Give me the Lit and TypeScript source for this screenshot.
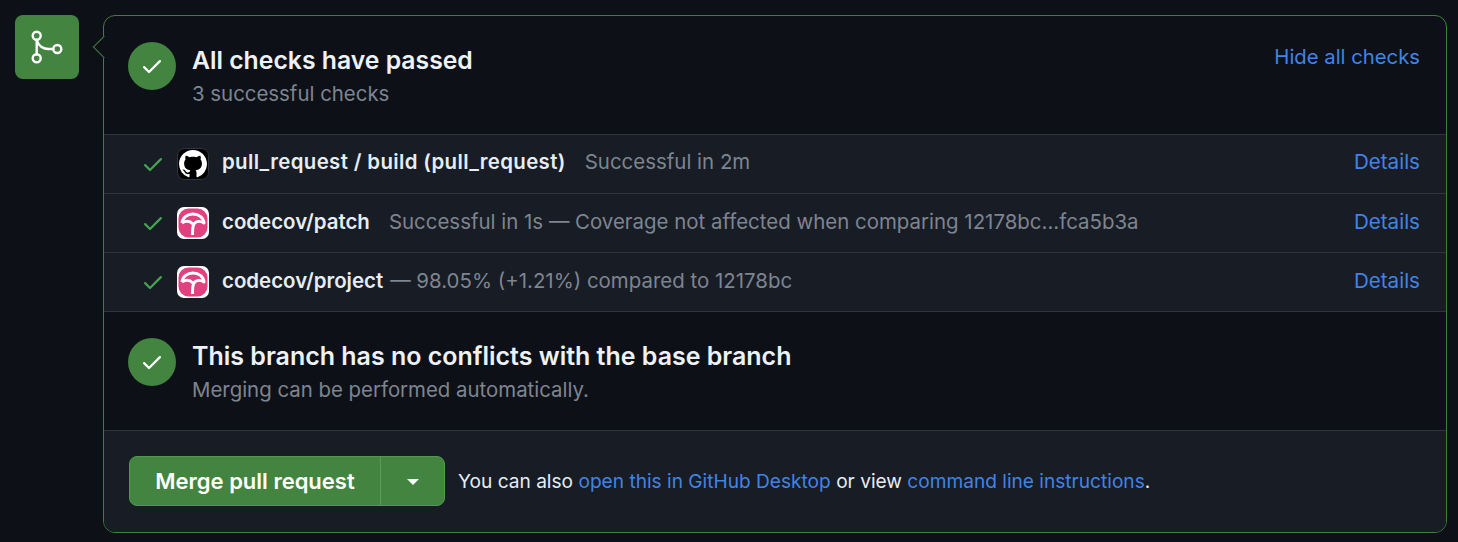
import { LitElement, css, html, svg } from "lit";
import { customElement } from "lit/decorators.js";

const CHECK =
  "M13.78 4.22a.75.75 0 0 1 0 1.06l-7.25 7.25a.75.75 0 0 1-1.06 0L2.22 9.28a.751.751 0 0 1 .018-1.042.751.751 0 0 1 1.042-.018L6 10.94l6.72-6.72a.75.75 0 0 1 1.06 0Z";
const MARK =
  "M8 0c4.42 0 8 3.58 8 8a8.013 8.013 0 0 1-5.45 7.59c-.4.08-.55-.17-.55-.38 0-.27.01-1.13.01-2.2 0-.75-.25-1.23-.54-1.48 1.78-.2 3.65-.88 3.65-3.95 0-.88-.31-1.59-.82-2.15.08-.2.36-1.02-.08-2.12 0 0-.67-.22-2.2.82-.64-.18-1.32-.27-2-.27-.68 0-1.36.09-2 .27-1.53-1.03-2.2-.82-2.2-.82-.44 1.1-.16 1.92-.08 2.12-.51.56-.82 1.28-.82 2.15 0 3.06 1.86 3.75 3.64 3.95-.23.2-.44.55-.51 1.07-.46.21-1.61.55-2.33-.66-.15-.24-.6-.83-1.23-.82-.67.01-.27.38.01.53.34.19.73.9.82 1.13.16.45.68 1.31 2.69.94 0 .67.01 1.3.01 1.49 0 .21-.15.45-.55.38A7.995 7.995 0 0 1 0 8c0-4.42 3.58-8 8-8Z";

const checks = [
  { logo: "github", name: "pull_request / build (pull_request)", cls: "spaced wide", note: "Successful in 2m" },
  { logo: "codecov", name: "codecov/patch", cls: "spaced", note: "Successful in 1s — Coverage not affected when comparing 12178bc...fca5b3a" },
  { logo: "codecov", name: "codecov/project", cls: "", note: "— 98.05% (+1.21%) compared to 12178bc" },
];

const octicon = (d: string, size: number) => html`<svg width=${size} height=${size} viewBox="0 0 16 16" fill="currentColor"><path d=${d}></path></svg>`;

const githubLogo = svg`<rect x="0.5" y="0.5" width="31" height="31" rx="7" fill="#000" stroke="#30363d"/><svg x="2" y="2" width="28" height="28" viewBox="0 0 16 16"><path d=${MARK} fill="#fff"/></svg>`;
const codecovLogo = svg`<rect width="32" height="32" rx="7" fill="#fff"/><rect x="1.500" y="1.500" width="29" height="29" rx="10" fill="#e2407f"/><g fill="none" stroke="#fff" stroke-width="3" stroke-linejoin="round"><path d="M5 16C5.500 10.500 10.500 7 16 7S26.500 10.500 27 16C23 13.500 19 14 16.800 17.200 15.800 19 15.500 23 15.500 28"/><path d="M5 16C9 13.500 13 14 16 17"/></g>`;

@customElement("app-root")
export class AppRoot extends LitElement {
  render() {
    return html`
      <div class="page">
        <div class="badge">
          <svg width="64" height="64" viewBox="0 0 64 64" fill="none" stroke="currentColor" stroke-width="2.400" stroke-linecap="round">
            <circle cx="21.700" cy="20.700" r="4"></circle>
            <circle cx="21.700" cy="43.300" r="4"></circle>
            <circle cx="42.300" cy="34" r="4"></circle>
            <path d="M21.700 24.700v14.600M21.900 26c2 4.500 6 8 11.600 8h4.800"></path>
          </svg>
        </div>
        <div class="card">
          <section class="status top">
            <div class="circle">${octicon(CHECK, 24)}</div>
            <div class="status-text">
              <h3>All checks have passed</h3>
              <p>3 successful checks</p>
            </div>
            <a class="hide">Hide all checks</a>
          </section>
          <div class="checks">
            ${checks.map(
              (c) => html`
                <div class="row">
                  <span class="tick">${octicon(CHECK, 24)}</span>
                  <svg class="logo" width="32" height="32" viewBox="0 0 32 32">${c.logo === "github" ? githubLogo : codecovLogo}</svg>
                  <strong class=${c.cls}>${c.name}</strong>
                  <span class="note">${c.note}</span>
                  <a class="details">Details</a>
                </div>
              `,
            )}
          </div>
          <section class="status mid">
            <div class="circle">${octicon(CHECK, 24)}</div>
            <div class="status-text">
              <h3>This branch has no conflicts with the base branch</h3>
              <p>Merging can be performed automatically.</p>
            </div>
          </section>
          <footer>
            <div class="merge">
              <button class="main">Merge pull request</button>
              <button class="caret"><span></span></button>
            </div>
            <p class="also">
              You can also <a>open this in GitHub Desktop</a> or view <a>command line instructions</a>.
            </p>
          </footer>
        </div>
      </div>
    `;
  }

  static styles = css`
    :host {
      display: block;
      font-family: Inter, "Liberation Sans", sans-serif;
      color: #e6edf3;
    }

    * {
      box-sizing: border-box;
    }

    .page {
      display: flex;
      gap: 24px;
      height: 542px;
      padding: 15px 11px 9px 15px;
      background: #0d1117;
    }

    .badge {
      flex: none;
      display: flex;
      width: 64px;
      height: 64px;
      border-radius: 8px;
      background: #438440;
      color: #fff;
    }

    .card {
      position: relative;
      flex: 1;
      display: flex;
      flex-direction: column;
      border: 1px solid #3f7f3d;
      border-radius: 12px;
      background: #0d1117;
    }

    .card::before {
      content: "";
      position: absolute;
      top: 23px;
      left: -8px;
      width: 15px;
      height: 15px;
      border-left: 1px solid #3f7f3d;
      border-bottom: 1px solid #3f7f3d;
      background: #0d1117;
      transform: rotate(45deg);
    }

    .status {
      position: relative;
      display: flex;
      align-items: flex-start;
      gap: 16px;
      padding: 26px 26px 0 24px;
    }

    .status.top {
      height: 118px;
    }

    .status.mid {
      height: 119px;
      padding-top: 26px;
      border-top: 1px solid #30363d;
    }

    .circle {
      flex: none;
      display: flex;
      align-items: center;
      justify-content: center;
      width: 48px;
      height: 48px;
      border-radius: 50%;
      background: #438440;
      color: #fff;
    }

    .status-text {
      flex: 1;
    }

    h3 {
      margin: 0;
      font-size: 24.750px;
      line-height: 36px;
      font-weight: 600;
      color: #eef2f6;
    }

    .mid h3 {
      font-size: 24.980px;
    }

    .status-text p {
      margin: 1px 0 0;
      font-size: 20.400px;
      line-height: 30px;
      color: #7d8590;
    }

    a {
      color: #4184e4;
    }

    .hide {
      font-size: 20.300px;
      line-height: 30px;
    }

    .checks {
      background: #181c25;
    }

    .row {
      display: flex;
      align-items: center;
      height: 59px;
      padding: 0 26px 0 37px;
      border-top: 1px solid #30363d;
      font-size: 20.450px;
    }

    .tick {
      display: flex;
      color: #46a34f;
      margin-right: 12px;
    }

    .logo {
      flex: none;
      margin-right: 13px;
    }

    strong {
      font-weight: 600;
      color: #e6edf3;
      margin: 0 7px 3px 0;
    }

    strong.spaced {
      margin-right: 19px;
    }

    strong.wide {
      letter-spacing: 0.350px;
    }

    .note {
      flex: 1;
      padding-bottom: 3px;
      color: #7d8590;
    }

    .details {
      padding-bottom: 3px;
      font-size: 20.600px;
    }

    .row:first-child strong {
      margin-bottom: 5px;
    }

    .row:first-child .note,
    .row:first-child .details {
      padding-bottom: 5px;
    }

    footer {
      flex: 1;
      display: flex;
      align-items: center;
      gap: 13px;
      padding: 0 25px;
      border-top: 1px solid #30363d;
      border-radius: 0 0 11px 11px;
      background: #181c25;
    }

    .merge {
      display: flex;
      height: 50px;
      margin-bottom: 2px;
      border-radius: 8px;
      overflow: hidden;
      border: 1px solid #4f9a4c;
      background: #438440;
    }

    button {
      border: 0;
      background: none;
      color: #fff;
      font: inherit;
    }

    .main {
      width: 250px;
      font-size: 22px;
      font-weight: 600;
    }

    .caret {
      width: 64px;
      display: flex;
      align-items: center;
      justify-content: center;
      border-left: 1px solid #5a9c57;
    }

    .caret span {
      margin-top: 3px;
      border-top: 6px solid #fff;
      border-left: 6px solid transparent;
      border-right: 6px solid transparent;
    }

    .also {
      margin: 0 0 2px;
      font-size: 19.120px;
      color: #e6edf3;
    }
  `;
}
